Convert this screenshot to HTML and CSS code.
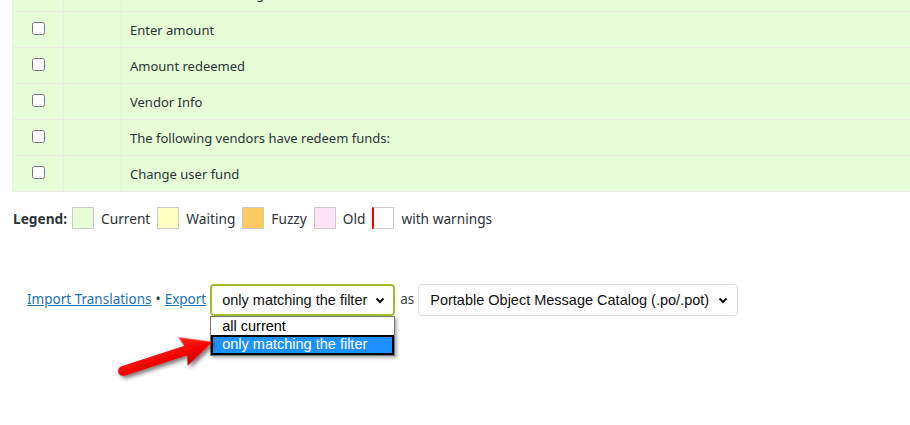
FILE: index.html
```html
<!DOCTYPE html>
<html lang="en">
<head>
    <meta charset="UTF-8">
    <meta name="viewport" content="width=device-width, initial-scale=1.0">
    <title>Translations</title>
    <link rel="stylesheet" href="styles.css">
</head>
<body>
    <div class="page">
        <table class="strings">
            <tbody>
                <tr><td class="cb"><input type="checkbox"></td><td class="ctx"></td><td class="orig">Redeem funds setting</td></tr>
                <tr><td class="cb"><input type="checkbox"></td><td class="ctx"></td><td class="orig">Enter amount</td></tr>
                <tr><td class="cb"><input type="checkbox"></td><td class="ctx"></td><td class="orig">Amount redeemed</td></tr>
                <tr><td class="cb"><input type="checkbox"></td><td class="ctx"></td><td class="orig">Vendor Info</td></tr>
                <tr><td class="cb"><input type="checkbox"></td><td class="ctx"></td><td class="orig">The following vendors have redeem funds:</td></tr>
                <tr><td class="cb"><input type="checkbox"></td><td class="ctx"></td><td class="orig">Change user fund</td></tr>
            </tbody>
        </table>

        <div class="legend">
            <strong>Legend:</strong>
            <span class="swatch current"></span><span>Current</span>
            <span class="swatch waiting"></span><span>Waiting</span>
            <span class="swatch fuzzy"></span><span>Fuzzy</span>
            <span class="swatch old"></span><span>Old</span>
            <span class="swatch warnings"></span><span>with warnings</span>
        </div>

        <div class="actions">
            <a href="#">Import Translations</a>
            <span class="bullet">&bull;</span>
            <a href="#">Export</a>
            <div class="select-wrap">
                <div class="fake-select filter">
                    <span>only matching the filter</span>
                    <svg class="chevron" width="10" height="7" viewBox="0 0 10 7"><path d="M1.5 1.5 L5 5 L8.5 1.5" fill="none" stroke="#111" stroke-width="2"/></svg>
                </div>
                <ul class="choices">
                    <li class="choice">all current</li>
                    <li class="choice picked">only matching the filter</li>
                </ul>
            </div>
            <span class="as">as</span>
            <div class="select-wrap">
                <div class="fake-select format">
                    <span>Portable Object Message Catalog (.po/.pot)</span>
                    <svg class="chevron" width="10" height="7" viewBox="0 0 10 7"><path d="M1.5 1.5 L5 5 L8.5 1.5" fill="none" stroke="#111" stroke-width="2"/></svg>
                </div>
            </div>
        </div>
    </div>

    <svg class="arrow" width="910" height="425" viewBox="0 0 910 425">
        <defs>
            <linearGradient id="red" x1="0" y1="0" x2="0" y2="1">
                <stop offset="0" stop-color="#ff2a1a"/>
                <stop offset="0.6" stop-color="#f00000"/>
                <stop offset="1" stop-color="#b80000"/>
            </linearGradient>
            <filter id="shadow" x="-20%" y="-50%" width="140%" height="200%">
                <feDropShadow dx="2" dy="3" stdDeviation="2" flood-color="#000" flood-opacity="0.55"/>
            </filter>
        </defs>
        <g transform="translate(123 371) rotate(-18)" filter="url(#shadow)">
            <path d="M0 -5 L66 -5 L63 -15 L94 0 L63 15 L66 5 L0 5 A5 5 0 0 1 0 -5 Z" fill="url(#red)"/>
        </g>
    </svg>
</body>
</html>
```

FILE: styles.css
```css
body {
    margin: 0;
    font-family: "Noto Sans", "Open Sans", sans-serif;
    font-size: 13px;
    color: #2c3338;
    background: #ffffff;
}
.page {
    padding-left: 12px;
    height: 425px;
    overflow: hidden;
}
.strings {
    margin-top: -25px;
    width: calc(100% + 20px);
    border-collapse: collapse;
    background: #e7fdd8;
}
.strings td {
    height: 35px;
    padding: 0 8px;
    border: 1px solid #e8ece4;
    vertical-align: middle;
}
.strings td.cb {
    width: 34px;
    text-align: center;
}
.strings td.ctx {
    width: 41px;
}
.strings input {
    margin: 0 0 3px 1px;
    width: 13px;
    height: 13px;
}
.legend {
    display: flex;
    align-items: center;
    gap: 7px;
    margin-top: 15px;
    padding-left: 1px;
    font-size: 13.7px;
}
.legend strong {
    margin-right: -2px;
}
.swatch {
    display: inline-block;
    width: 20px;
    height: 20px;
    border: 1px solid #c9c9c9;
}
.swatch.current { background: #e7fdd8; }
.swatch.waiting { background: #ffffc2; }
.swatch.fuzzy { background: #ffc961; }
.swatch.old { background: #fde3f5; }
.swatch.warnings {
    background: #ffffff;
    border-left: 2px solid #f00000;
    width: 19px;
}
.actions {
    display: flex;
    align-items: flex-start;
    margin-top: 55px;
    padding-left: 15px;
    font-size: 13.5px;
    line-height: 31px;
}
.actions a {
    color: #2271b1;
}
.bullet {
    margin: 0 4px;
}
.select-wrap {
    display: flex;
    flex-direction: column;
    margin-left: 4px;
}
.fake-select {
    display: flex;
    align-items: center;
    justify-content: space-between;
    box-sizing: border-box;
    height: 32px;
    border-radius: 4px;
    background: #ffffff;
    font-family: "Liberation Sans", Arial, sans-serif;
    font-size: 14.5px;
    color: #111;
    white-space: nowrap;
}
.fake-select.filter {
    width: 185px;
    border: 2px solid #9fc02c;
    padding: 0 8px 0 10px;
}
.fake-select.format {
    width: 320px;
    border: 1px solid #dcdcde;
    padding: 0 9px 0 11px;
}
.as {
    margin-left: 5px;
    color: #3c434a;
}
.choices {
    list-style: none;
    margin: 0;
    padding: 0;
    width: 183px;
    border: 1px solid #767676;
    background: #ffffff;
    box-shadow: 2px 2px 3px rgba(0, 0, 0, 0.3);
    font-family: "Liberation Sans", Arial, sans-serif;
    font-size: 14.5px;
    color: #000;
}
.choice {
    height: 19px;
    line-height: 18px;
    padding-left: 11px;
}
.choice.picked {
    height: 16px;
    line-height: 15px;
    padding-left: 9px;
    margin: 0 1px 1px 1px;
    background: #1e90ff;
    color: #ffffff;
    border: 1px solid #000;
    outline: 1px solid #000;
}
.arrow {
    position: absolute;
    left: 0;
    top: 0;
    pointer-events: none;
}
```
